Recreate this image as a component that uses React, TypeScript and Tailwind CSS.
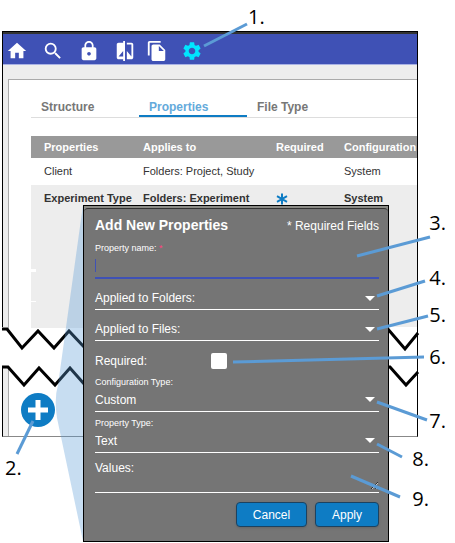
import { useState } from "react"
import type { ReactNode } from "react"
import { MdHome, MdSearch, MdLock, MdCompare, MdFileCopy, MdSettings } from "react-icons/md"

const tabs = ["Structure", "Properties", "File Type"]

const rows = [
  { name: "Client", appliesTo: "Folders: Project, Study", required: false, configuration: "System" },
  { name: "Experiment Type", appliesTo: "Folders: Experiment", required: true, configuration: "System" },
]

const callouts = [
  { label: "1.", place: "left-[248px] top-[3px]", line: [204, 46, 247, 24] },
  { label: "2.", place: "left-[5px] top-[454px]", line: [33, 421, 17, 454] },
  { label: "3.", place: "right-[9px] top-[209px]", line: [357, 256, 430, 237] },
  { label: "4.", place: "right-[9px] top-[264px]", line: [377, 296, 425, 281] },
  { label: "5.", place: "right-[9px] top-[301px]", line: [377, 329, 428, 316] },
  { label: "6.", place: "right-[9px] top-[343px]", line: [233, 362, 424, 357] },
  { label: "7.", place: "right-[9px] top-[407px]", line: [377, 402, 427, 420] },
  { label: "8.", place: "right-[26px] top-[445px]", line: [377, 444, 402, 457] },
  { label: "9.", place: "right-[26px] top-[485px]", line: [351, 476, 400, 497] },
]

function Toolbar() {
  return (
    <nav className="flex h-[33px] items-center border-t-2 border-b border-t-[#333] border-b-[#a9b2e4] bg-[#3f51b5] pt-[3px] pl-[3px] text-white">
      <div className="flex gap-[14px]">
        <button aria-label="Home"><MdHome size={22} /></button>
        <button aria-label="Search"><MdSearch size={22} /></button>
        <button aria-label="Lock"><MdLock size={22} /></button>
        <button aria-label="Compare"><MdCompare size={22} /></button>
      </div>
      <div className="ml-[10px] flex gap-[13px]">
        <button aria-label="Copy"><MdFileCopy size={22} /></button>
        <button aria-label="Settings" className="text-[#00e5ff]"><MdSettings size={22} /></button>
      </div>
    </nav>
  )
}

function PropertiesTable() {
  return (
    <table className="mt-[18px] w-full table-fixed text-left text-[11px] whitespace-nowrap text-[#333]">
      <colgroup>
        <col className="w-[112px]" />
        <col className="w-[133px]" />
        <col className="w-[68px]" />
        <col />
      </colgroup>
      <thead>
        <tr className="h-[22px] bg-[#999] text-white">
          <th className="pl-[13px] font-bold">Properties</th>
          <th className="font-bold">Applies to</th>
          <th className="font-bold">Required</th>
          <th className="font-bold">Configuration</th>
        </tr>
      </thead>
      <tbody>
        {rows.map((row) => (
          <tr key={row.name} className={row.required ? "h-[27px] bg-[#ededed] font-bold" : "h-[27px]"}>
            <td className="pl-[13px]">{row.name}</td>
            <td>{row.appliesTo}</td>
            <td>
              {row.required && (
                <svg viewBox="0 0 12 12" className="size-3 stroke-[#0e7cc4]" strokeWidth="2" aria-label="Required">
                  <path d="M6 0.5V11.5M1 3.2L11 8.8M11 3.2L1 8.8" />
                </svg>
              )}
            </td>
            <td>{row.configuration}</td>
          </tr>
        ))}
      </tbody>
    </table>
  )
}

function Arrow() {
  return (
    <svg viewBox="0 0 10 5" className="mr-1 h-[5px] w-[10px] fill-white">
      <path d="M0 0H10L5 5Z" />
    </svg>
  )
}

function InlineSelect({ id, label }: { id: string; label: string }) {
  return (
    <div className="flex h-[31px] items-center border-b border-white pt-2">
      <label htmlFor={id}>{label}</label>
      <select id={id} className="min-w-0 flex-1 appearance-none bg-transparent outline-none">
        <option value=""></option>
      </select>
      <Arrow />
    </div>
  )
}

function StackedSelect({ id, label, children }: { id: string; label: string; children: ReactNode }) {
  return (
    <>
      <label htmlFor={id} className="block text-[9px] leading-3">{label}</label>
      <div className="flex h-6 items-center border-b border-white">
        <select id={id} className="min-w-0 flex-1 appearance-none bg-transparent outline-none">
          {children}
        </select>
        <Arrow />
      </div>
    </>
  )
}

function PropertyDialog() {
  const [name, setName] = useState("")

  return (
    <form
      role="dialog"
      aria-labelledby="dialog-title"
      onSubmit={(e) => e.preventDefault()}
      className="absolute top-[205px] right-[66px] left-[83px] border border-black bg-[#8b8b86] pt-[2px]"
    >
      <div className="rounded-t-[4px] border-t border-[#333] bg-[#757575] pr-[9px] pb-[14px] pl-[11px] text-[12px] text-white">
        <div className="flex h-[33px] items-center justify-between">
          <h2 id="dialog-title" className="text-[14px] font-bold">Add New Properties</h2>
          <span>* Required Fields</span>
        </div>

        <label htmlFor="name" className="block text-[9px] leading-3">
          Property name: <span className="text-[#ff4081]">*</span>
        </label>
        <div className="flex h-[25px] items-center border-b-2 border-[#3f51b5]">
          <input
            id="name"
            required
            value={name}
            onChange={(e) => setName(e.target.value)}
            className="h-[13px] w-full border-l border-[#3f51b5] bg-transparent outline-none"
          />
        </div>

        <InlineSelect id="folders" label="Applied to Folders:" />
        <InlineSelect id="files" label="Applied to Files:" />

        <div className="flex h-[35px] items-center pt-1">
          <label htmlFor="required" className="w-[116px]">Required:</label>
          <input id="required" type="checkbox" className="size-4 appearance-none rounded-[2px] bg-white" />
        </div>

        <StackedSelect id="configuration" label="Configuration Type:">
          <option>Custom</option>
        </StackedSelect>
        <div className="pt-[5px]">
          <StackedSelect id="type" label="Property Type:">
            <option>Text</option>
          </StackedSelect>
        </div>

        <div className="flex h-10 border-b border-white pt-[7px]">
          <label htmlFor="values" className="leading-4">Values:</label>
          <textarea id="values" className="h-[30px] min-w-0 flex-1 resize bg-transparent outline-none" />
        </div>

        <div className="mt-[9px] flex justify-end gap-2">
          <button type="button" className="h-[25px] w-[71px] rounded-[4px] border border-[#1c4260] bg-[#0e7cc4] shadow">
            Cancel
          </button>
          <button type="submit" className="h-[25px] w-16 rounded-[4px] border border-[#1c4260] bg-[#0e7cc4] shadow">
            Apply
          </button>
        </div>
      </div>
    </form>
  )
}

// torn page edges and the beam from the add button to the dialog
function TornEdges() {
  return (
    <svg
      viewBox="0 0 455 543"
      preserveAspectRatio="none"
      className="pointer-events-none absolute inset-0 h-full w-full"
      aria-hidden="true"
    >
      <path
        d="M0 327H7L22 348L38 331L54 348L69 331L85 348H388V327H417V373L406 385L390 367H85V385L70 368L55 385L39 368L24 385L8 367H0Z"
        fill="#fff"
      />
      <path d="M31 269h5v3h-5zM31 301h5v1h-5z" fill="#fff" />
      <g fill="none" stroke="#000" strokeWidth="3">
        <path d="M2 329H7L22 348L38 331L54 348L69 331L85 348" />
        <path d="M2 367H8L24 385L39 368L55 385L70 368L85 385" />
        <path d="M387 328L405 349L418 333" />
        <path d="M387 367H390L406 385L418 372" />
      </g>
      <path d="M83 205L58 385Q54 398 57 418L83 541Z" fill="#5b9bd5" fillOpacity="0.34" />
    </svg>
  )
}

function Callouts() {
  return (
    <>
      <svg
        viewBox="0 0 455 543"
        preserveAspectRatio="none"
        className="pointer-events-none absolute inset-0 h-full w-full"
        aria-hidden="true"
      >
        {callouts.map(({ label, line: [x1, y1, x2, y2] }) => (
          <line key={label} x1={x1} y1={y1} x2={x2} y2={y2} stroke="#5b9bd5" strokeWidth="3" />
        ))}
      </svg>
      {callouts.map(({ label, place }) => (
        <span key={label} className={`absolute font-[Open_Sans,sans-serif] text-[20px] leading-7 text-black ${place}`}>
          {label}
        </span>
      ))}
    </>
  )
}

export default function App() {
  const [active, setActive] = useState("Properties")

  return (
    <main className="relative bg-white pt-[31px] pr-[37px] pb-[106px] pl-[2px] font-[Liberation_Sans,Arial,sans-serif]">
      <div className="border border-b-[#888] border-black bg-[#ededed]">
        <Toolbar />
        <section className="mt-[14px] ml-[5px] min-h-[357px] border-t border-l border-[#aaa] bg-white pt-[14px] pl-[22px]">
          <div role="tablist" className="flex h-6 border-b border-[#ddd] text-[12px] font-bold">
            {tabs.map((tab) => (
              <button
                key={tab}
                role="tab"
                aria-selected={tab === active}
                onClick={() => setActive(tab)}
                className={`w-[108px] border-b-2 pt-1 pl-[10px] text-left ${
                  tab === active ? "border-[#0e7cc4] text-[#64aadb]" : "border-transparent text-[#777]"
                }`}
              >
                {tab}
              </button>
            ))}
          </div>
          <PropertiesTable />
          <div className="h-[116px] bg-[#ededed]" />
          <button
            aria-label="Add property"
            className="mt-[65px] -ml-[10px] grid size-[34px] place-items-center rounded-full bg-[#0e7cc4]"
          >
            <svg viewBox="0 0 20 20" className="size-5 stroke-white" strokeWidth="5">
              <path d="M10 0V20M0 10H20" />
            </svg>
          </button>
        </section>
      </div>
      <TornEdges />
      <PropertyDialog />
      <Callouts />
    </main>
  )
}
